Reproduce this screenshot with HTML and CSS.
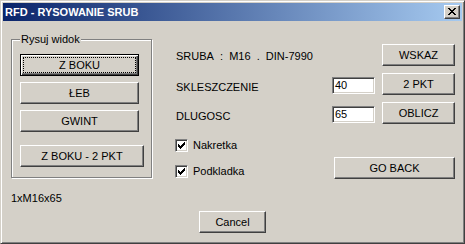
FILE: index.html
```html
<!DOCTYPE html>
<html lang="pl">

<head>
    <meta charset="UTF-8">
    <title>RFD - RYSOWANIE SRUB</title>
    <link rel="stylesheet" href="styles.css">
</head>

<body>
    <div class="window">
        <div class="titlebar">
            <span class="title">RFD - RYSOWANIE SRUB</span>
            <button class="close-btn">
                <svg width="8" height="7" viewBox="0 0 8 7" shape-rendering="crispEdges">
                    <path fill="#000" d="M0 0h2v1H0zM6 0h2v1H6zM1 1h2v1H1zM5 1h2v1H5zM2 2h4v1H2zM3 3h2v1H3zM2 4h4v1H2zM1 5h2v1H1zM5 5h2v1H5zM0 6h2v1H0zM6 6h2v1H6z" />
                </svg>
            </button>
        </div>
        <div class="client">
            <div class="top">
                <div class="left">
                    <div class="groupbox">
                        <span class="group-label">Rysuj widok</span>
                        <button class="btn default">Z BOKU</button>
                        <button class="btn">ŁEB</button>
                        <button class="btn">GWINT</button>
                        <button class="btn wide">Z BOKU - 2 PKT</button>
                    </div>
                    <div class="status">1xM16x65</div>
                </div>
                <div class="form">
                    <span class="label first">SRUBA&nbsp; : &nbsp;M16&nbsp; . &nbsp;DIN-7990</span>
                    <button class="btn side col3">WSKAZ</button>

                    <span class="label">SKLESZCZENIE</span>
                    <div class="edit">40</div>
                    <button class="btn side">2 PKT</button>

                    <span class="label">DLUGOSC</span>
                    <div class="edit">65</div>
                    <button class="btn side">OBLICZ</button>

                    <label class="check">
                        <span class="box">
                            <svg width="7" height="7" viewBox="0 0 7 7" shape-rendering="crispEdges">
                                <path fill="#000" d="M6 0h1v1H6zM5 1h2v1H5zM0 2h1v1H0zM4 2h3v1H4zM0 3h2v1H0zM3 3h3v1H3zM0 4h5v1H0zM1 5h3v1H1zM2 6h1v1H2z" />
                            </svg>
                        </span>
                        Nakretka
                    </label>

                    <label class="check last">
                        <span class="box">
                            <svg width="7" height="7" viewBox="0 0 7 7" shape-rendering="crispEdges">
                                <path fill="#000" d="M6 0h1v1H6zM5 1h2v1H5zM0 2h1v1H0zM4 2h3v1H4zM0 3h2v1H0zM3 3h3v1H3zM0 4h5v1H0zM1 5h3v1H1zM2 6h1v1H2z" />
                            </svg>
                        </span>
                        Podkladka
                    </label>
                    <button class="btn goback">GO BACK</button>
                </div>
            </div>
            <div class="bottom">
                <button class="btn cancel">Cancel</button>
            </div>
        </div>
    </div>
</body>

</html>
```

FILE: styles.css
```css
* {
    margin: 0;
    padding: 0;
    box-sizing: border-box;
}

body {
    background: #d4d0c8;
    font-family: "Liberation Sans", Arial, sans-serif;
    font-size: 11px;
    color: #000;
}

/* okno dialogu z obramowaniem 3D */
.window {
    width: 465px;
    height: 244px;
    background: #d4d0c8;
    border: 1px solid;
    border-color: #d4d0c8 #404040 #404040 #d4d0c8;
    box-shadow: inset 1px 1px #fff, inset -1px -1px #808080;
    padding: 2px;
}

.titlebar {
    height: 18px;
    display: flex;
    align-items: center;
    justify-content: space-between;
    background: linear-gradient(90deg, #0a246a, #a6caf0);
}

.title {
    padding-left: 2px;
    color: #fff;
    font-weight: bold;
    font-size: 11px;
    line-height: 18px;
}

.close-btn {
    width: 16px;
    height: 14px;
    margin-right: 2px;
    background: #d4d0c8;
    border: 1px solid;
    border-color: #fff #404040 #404040 #fff;
    box-shadow: inset -1px -1px #808080;
    padding: 2px 0 0 3px;
    display: flex;
    align-items: flex-start;
}

.close-btn svg {
    display: block;
}

.client {
    height: 220px;
}

.top {
    display: flex;
    height: 190px;
}

.left {
    margin-left: 8px;
    width: 141px;
    padding-top: 18px;
}

/* ramka grupy */
.groupbox {
    position: relative;
    height: 139px;
    border: 1px solid #808080;
    box-shadow: 1px 1px #fff, inset 1px 1px #fff;
    padding: 14px 0 0 8px;
    display: flex;
    flex-direction: column;
    align-items: flex-start;
    gap: 6px;
}

.group-label {
    position: absolute;
    top: -7px;
    left: 8px;
    padding: 0 1px;
    line-height: 13px;
    background: #d4d0c8;
}

.btn {
    font-family: inherit;
    font-size: 11px;
    color: #000;
    height: 22px;
    width: 119px;
    background: #d4d0c8;
    border: 1px solid;
    border-color: #fff #404040 #404040 #fff;
    box-shadow: inset -1px -1px #808080;
    text-align: center;
    line-height: 18px;
}

.btn.default {
    border-color: #000;
    box-shadow: inset 1px 1px #fff, inset -1px -1px #404040, inset -2px -2px #808080;
    outline: 1px dotted #000;
    outline-offset: -4px;
}

.btn.wide {
    width: 124px;
    margin-top: 7px;
}

.status {
    margin-top: 14px;
    line-height: 13px;
}

.form {
    margin: 23px 0 0 23px;
    display: grid;
    grid-template-columns: 157px 50px 73px;
    grid-template-rows: 29px 29px 37px 18px 22px;
    align-items: start;
}

.label {
    grid-column: 1;
    padding-left: 1px;
    line-height: 22px;
    padding-top: 3px;
}

.label.first {
    padding-top: 1px;
}

.btn.side {
    grid-column: 3;
    width: 73px;
}

.edit {
    grid-column: 2;
    width: 43px;
    height: 17px;
    margin-top: 4px;
    background: #fff;
    border: 1px solid;
    border-color: #808080 #fff #fff #808080;
    box-shadow: inset 1px 1px #404040, inset -1px -1px #d4d0c8;
    padding-left: 2px;
    line-height: 15px;
}

.check {
    grid-column: 1;
    display: flex;
    align-items: center;
    gap: 5px;
    line-height: 13px;
}

.check.last {
    align-self: end;
    margin-bottom: 1px;
}

.box {
    width: 13px;
    height: 13px;
    background: #fff;
    border: 1px solid;
    border-color: #808080 #fff #fff #808080;
    box-shadow: inset 1px 1px #404040, inset -1px -1px #d4d0c8;
    padding: 2px;
}

.box svg {
    display: block;
}

.btn.goback {
    grid-column: 2 / 4;
    justify-self: end;
    width: 121px;
}

.bottom {
    padding-left: 196px;
}

.btn.cancel {
    width: 67px;
}
```
